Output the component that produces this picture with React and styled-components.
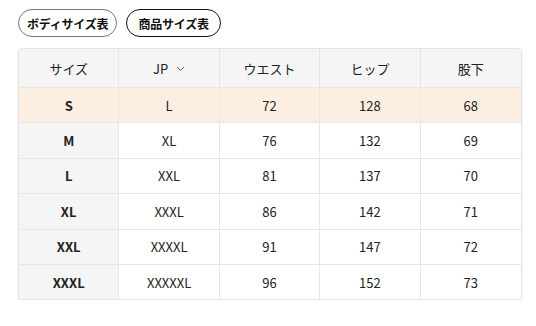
import styled, { createGlobalStyle } from 'styled-components';

const GlobalStyle = createGlobalStyle`
	body {
		margin: 0;
		background: #fff;
		font-family: "Noto Sans CJK JP", "Noto Sans", sans-serif;
		color: #222;
	}
`;

const ROWS = [
	{ size: 'S', jp: 'L', waist: 72, hip: 128, inseam: 68, active: true },
	{ size: 'M', jp: 'XL', waist: 76, hip: 132, inseam: 69 },
	{ size: 'L', jp: 'XXL', waist: 81, hip: 137, inseam: 70 },
	{ size: 'XL', jp: 'XXXL', waist: 86, hip: 142, inseam: 71 },
	{ size: 'XXL', jp: 'XXXXL', waist: 91, hip: 147, inseam: 72 },
	{ size: 'XXXL', jp: 'XXXXXL', waist: 96, hip: 152, inseam: 73 },
];

const Page = styled.div`
	padding: 9px 14px 0 18px;
	width: 504px;
`;

const Tabs = styled.div`
	display: flex;
	gap: 9px;
	margin-bottom: 11px;
`;

const Tab = styled.button`
	height: 28px;
	padding: 0 ${({ $active }) => ($active ? '11px' : '8px')};
	border-radius: 14px;
	border: ${({ $active }) => ($active ? '1.5px solid #111' : '1px solid #777')};
	background: #fff;
	font-family: inherit;
	font-size: 12px;
	font-weight: 700;
	letter-spacing: -0.2px;
	color: #111;
	cursor: pointer;
`;

const Table = styled.div`
	display: grid;
	grid-template-columns: repeat(5, 1fr);
	border: 1px solid #e3e3e3;
	border-radius: 4px;
	overflow: hidden;
	box-shadow: 0 1px 2px rgba(0, 0, 0, 0.12);
`;

const Cell = styled.div`
	box-sizing: border-box;
	display: flex;
	align-items: center;
	justify-content: center;
	gap: 8px;
	height: ${({ $head }) => ($head ? '38px' : '35.4px')};
	font-size: 13px;
	font-weight: ${({ $bold }) => ($bold ? 700 : 400)};
	color: #222;
	background: ${({ $bg }) => $bg || '#fff'};
	border-right: ${({ $last }) => ($last ? 'none' : '1px solid #e6e6e6')};
	border-top: ${({ $head }) => ($head ? 'none' : '1px solid #e6e6e6')};
`;

const Chevron = () => (
	<svg width="9" height="6" viewBox="0 0 9 6" fill="none" style={{ marginTop: 2 }}>
		<path d="M1 1l3.5 3.5L8 1" stroke="#555" strokeWidth="1" />
	</svg>
);

const HEADERS = ['サイズ', 'JP', 'ウエスト', 'ヒップ', '股下'];

export default function App() {
	return (
		<>
			<GlobalStyle />
			<Page>
				<Tabs>
					<Tab>ボディサイズ表</Tab>
					<Tab $active>商品サイズ表</Tab>
				</Tabs>
				<Table>
					{HEADERS.map((h, i) => (
						<Cell key={h} $head $bg="#f5f5f5" $last={i === 4}>
							{h}
							{h === 'JP' && <Chevron />}
						</Cell>
					))}
					{ROWS.map((r) => {
						const bg = r.active ? '#fdeee2' : null;
						return [r.size, r.jp, r.waist, r.hip, r.inseam].map((v, i) => (
							<Cell
								key={r.size + i}
								$bold={i === 0}
								$bg={bg || (i === 0 ? '#f5f5f5' : '#fff')}
								$last={i === 4}
							>
								{v}
							</Cell>
						));
					})}
				</Table>
			</Page>
		</>
	);
}
